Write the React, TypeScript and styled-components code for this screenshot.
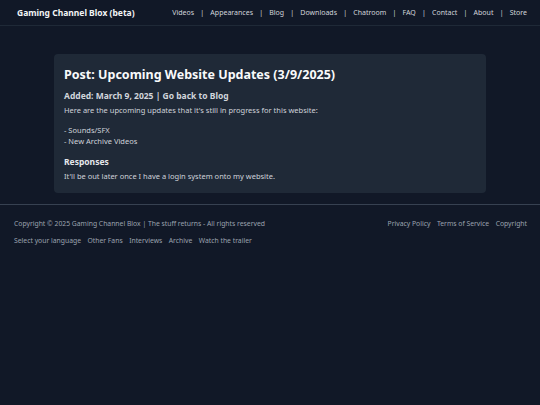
import React from "react";
import styled, { createGlobalStyle } from "styled-components";

const Global = createGlobalStyle`
  html, body { margin: 0; padding: 0; background: #111827; }
  body { font-family: "Noto Sans", "Open Sans", sans-serif; color: #d1d5db; }
  * { box-sizing: border-box; }
`;

const Page = styled.div`
  min-height: 405px;
  background: #111827;
  display: flex;
  flex-direction: column;
`;

const Header = styled.header`
  height: 26px;
  border-bottom: 1px solid #1f2937;
  display: flex;
  align-items: center;
  justify-content: space-between;
  padding: 0 13px 0 17px;
`;

const Brand = styled.div`
  font-size: 8.5px;
  font-weight: 700;
  color: #f3f4f6;
  white-space: nowrap;
`;

const Nav = styled.nav`
  display: flex;
  align-items: center;
  font-size: 7px;
  color: #d1d5db;
  white-space: nowrap;
`;

const NavLink = styled.span``;

const Sep = styled.span`
  margin: 0 6.2px;
  color: #d1d5db;
`;

const Main = styled.main`
  padding: 28px 54px 11px;
`;

const Card = styled.section`
  background: #1f2937;
  border-radius: 4px;
  padding: 12px 10px 12px;
  height: 139px;
`;

const Title = styled.h1`
  margin: 0;
  font-size: 12.5px;
  font-weight: 700;
  color: #f9fafb;
  line-height: 17px;
`;

const Sub = styled.h2`
  margin: 7px 0 0;
  font-size: 8.5px;
  font-weight: 700;
  color: #d1d5db;
  line-height: 12px;
`;

const Para = styled.p<{ $top?: number }>`
  margin: ${(p) => p.$top ?? 0}px 0 0;
  font-size: 7.5px;
  line-height: 11px;
  color: #cfd3da;
`;

const Heading = styled.h3`
  margin: 9px 0 0;
  font-size: 8.5px;
  font-weight: 700;
  color: #e5e7eb;
  line-height: 12px;
`;

const Footer = styled.footer`
  border-top: 1px solid #374151;
  padding: 13px 13px 0 14px;
  display: flex;
  flex-direction: column;
  gap: 5px;
  font-size: 6.8px;
  color: #9ca3af;
`;

const FootRow = styled.div`
  display: flex;
  justify-content: space-between;
  align-items: center;
  line-height: 12px;
`;

const Links = styled.div`
  display: flex;
  gap: 6.5px;
`;

export default function App() {
  const nav = ["Videos", "Appearances", "Blog", "Downloads", "Chatroom", "FAQ", "Contact", "About", "Store"];
  return (
    <Page>
      <Global />
      <Header>
        <Brand>Gaming Channel Blox (beta)</Brand>
        <Nav>
          {nav.map((n, i) => (
            <React.Fragment key={n}>
              {i > 0 && <Sep>|</Sep>}
              <NavLink>{n}</NavLink>
            </React.Fragment>
          ))}
        </Nav>
      </Header>
      <Main>
        <Card>
          <Title>Post: Upcoming Website Updates (3/9/2025)</Title>
          <Sub>Added: March 9, 2025 | Go back to Blog</Sub>
          <Para $top={3}>Here are the upcoming updates that it's still in progress for this website:</Para>
          <Para $top={9}>- Sounds/SFX</Para>
          <Para>- New Archive Videos</Para>
          <Heading>Responses</Heading>
          <Para $top={3}>It'll be out later once I have a login system onto my website.</Para>
        </Card>
      </Main>
      <Footer>
        <FootRow>
          <span>Copyright © 2025 Gaming Channel Blox | The stuff returns - All rights reserved</span>
          <Links>
            <span>Privacy Policy</span>
            <span>Terms of Service</span>
            <span>Copyright</span>
          </Links>
        </FootRow>
        <FootRow>
          <Links>
            <span>Select your language</span>
            <span>Other Fans</span>
            <span>Interviews</span>
            <span>Archive</span>
            <span>Watch the trailer</span>
          </Links>
        </FootRow>
      </Footer>
    </Page>
  );
}
